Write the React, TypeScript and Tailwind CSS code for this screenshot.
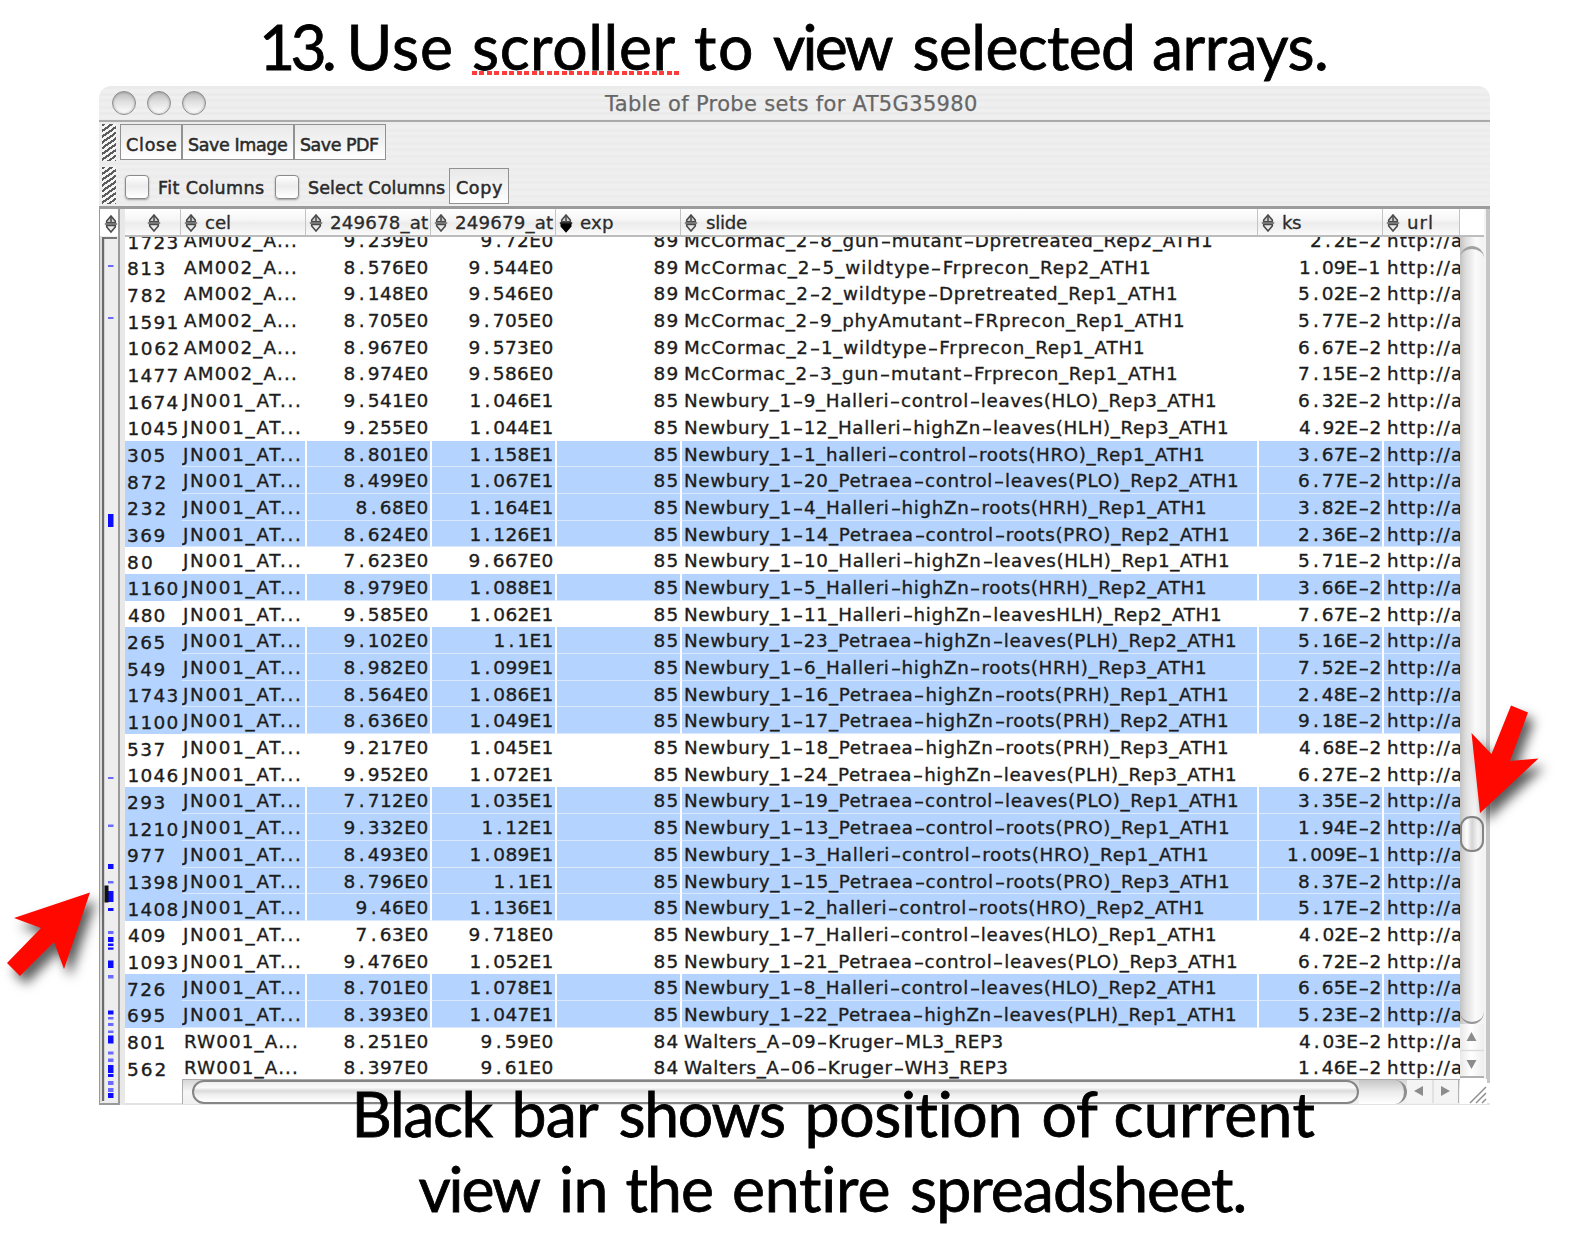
import React from "react";

const UI = '"DejaVu Sans", "Noto Sans", sans-serif';
const DISPLAY = 'Lato, "Open Sans", sans-serif';

let ctx: CanvasRenderingContext2D | null = null;
function measure(text: string, font: string) {
  if (!ctx) ctx = document.createElement("canvas").getContext("2d");
  ctx!.font = font;
  const m = ctx!.measureText(text);
  return { left: m.actualBoundingBoxLeft, ink: m.actualBoundingBoxLeft + m.actualBoundingBoxRight, advance: m.width };
}

/* Text tracked so that its ink spans exactly `width` pixels.
   `wide` lists characters that are set on a fixed, wider advance. */
function Fit({
  text,
  width,
  size,
  family = UI,
  weight = 400,
  ml = 0,
  wide = "",
  className = "",
}: {
  text: string;
  width: number;
  size: number;
  family?: string;
  weight?: number;
  ml?: number;
  wide?: string;
  className?: string;
}) {
  const font = `${weight} ${size}px ${family}`;
  const m = measure(text, font);
  const slot = size * 0.62;
  const chars = text.split("");
  const extra = chars.reduce((s, c) => (wide.includes(c) ? s + slot - measure(c, font).advance : s), 0);
  const spacing = (width - m.ink - extra) / Math.max(1, text.length - 1);
  const pieces = wide ? text.split(/([-.])/).filter(Boolean) : [text];
  return (
    <span className={"block shrink-0 whitespace-pre " + className} style={{ width, marginLeft: ml }}>
      <span
        className="block"
        style={{ fontFamily: family, fontWeight: weight, fontSize: size, letterSpacing: spacing, marginLeft: m.left }}
      >
        {pieces.map((p, i) =>
          wide && wide.includes(p) ? (
            <span
              key={i}
              className={"inline-block text-center tracking-normal " + (p === "-" ? "[transform:scaleX(1.6)]" : "")}
              style={{ width: slot + spacing }}
            >
              {p}
            </span>
          ) : (
            p
          ),
        )}
      </span>
    </span>
  );
}

type Word = [string, number, number];

function DisplayLine({ words, className = "" }: { words: Word[]; className?: string }) {
  let cursor = 0;
  return (
    <div className={"flex h-[75px] leading-[75px] text-black [-webkit-text-stroke:0.8px_#000] " + className}>
      {words.map(([text, x0, x1]) => {
        const ml = x0 - cursor;
        cursor = x1;
        return (
          <Fit
            key={text}
            text={text}
            width={x1 - x0}
            size={62.5}
            family={DISPLAY}
            ml={ml}
            className={
              text === "scroller"
                ? "relative after:absolute after:-left-[2px] after:top-[63px] after:h-[4px] after:w-[208px] after:bg-[repeating-linear-gradient(90deg,#ff3b3b_0_5px,#ffffff_5px_7.5px)] after:content-['']"
                : ""
            }
          />
        );
      })}
    </div>
  );
}

const TITLE: Word[] = [
  ["13.", 264, 334],
  ["Use", 351.5, 451],
  ["scroller", 474, 675.5],
  ["to", 695, 751],
  ["view", 773, 893.5],
  ["selected", 914.5, 1132],
  ["arrays.", 1154, 1326],
];
const CAPTION_1: Word[] = [
  ["Black", 356.5, 493.5],
  ["bar", 515.5, 599],
  ["shows", 620.5, 784],
  ["position", 808.5, 1019.5],
  ["of", 1043.5, 1098],
  ["current", 1115.5, 1314.5],
];
const CAPTION_2: Word[] = [
  ["view", 418.5, 541],
  ["in", 562, 604.5],
  ["the", 626.5, 712],
  ["entire", 734, 889.5],
  ["spreadsheet.", 912, 1244.5],
];

/* index, cel, 249678_at, 249679_at, exp, slide, slide width, ks, selected */
type Row = [string, string, string, string, string, string, number, string, boolean];
const AM = "AM002_A...";
const JN = "JN001_AT...";
const RW = "RW001_A...";
const ROWS: Row[] = [
  ["1723", AM, "9.239E0", "9.72E0", "89", "McCormac_2-8_gun-mutant-Dpretreated_Rep2_ATH1", 526, "2.2E-2", false],
  ["813", AM, "8.576E0", "9.544E0", "89", "McCormac_2-5_wildtype-Frprecon_Rep2_ATH1", 464, "1.09E-1", false],
  ["782", AM, "9.148E0", "9.546E0", "89", "McCormac_2-2_wildtype-Dpretreated_Rep1_ATH1", 491, "5.02E-2", false],
  ["1591", AM, "8.705E0", "9.705E0", "89", "McCormac_2-9_phyAmutant-FRprecon_Rep1_ATH1", 498, "5.77E-2", false],
  ["1062", AM, "8.967E0", "9.573E0", "89", "McCormac_2-1_wildtype-Frprecon_Rep1_ATH1", 458, "6.67E-2", false],
  ["1477", AM, "8.974E0", "9.586E0", "89", "McCormac_2-3_gun-mutant-Frprecon_Rep1_ATH1", 491, "7.15E-2", false],
  ["1674", JN, "9.541E0", "1.046E1", "85", "Newbury_1-9_Halleri-control-leaves(HLO)_Rep3_ATH1", 530, "6.32E-2", false],
  ["1045", JN, "9.255E0", "1.044E1", "85", "Newbury_1-12_Halleri-highZn-leaves(HLH)_Rep3_ATH1", 542, "4.92E-2", false],
  ["305", JN, "8.801E0", "1.158E1", "85", "Newbury_1-1_halleri-control-roots(HRO)_Rep1_ATH1", 518, "3.67E-2", true],
  ["872", JN, "8.499E0", "1.067E1", "85", "Newbury_1-20_Petraea-control-leaves(PLO)_Rep2_ATH1", 552, "6.77E-2", true],
  ["232", JN, "8.68E0", "1.164E1", "85", "Newbury_1-4_Halleri-highZn-roots(HRH)_Rep1_ATH1", 520, "3.82E-2", true],
  ["369", JN, "8.624E0", "1.126E1", "85", "Newbury_1-14_Petraea-control-roots(PRO)_Rep2_ATH1", 543, "2.36E-2", true],
  ["80", JN, "7.623E0", "9.667E0", "85", "Newbury_1-10_Halleri-highZn-leaves(HLH)_Rep1_ATH1", 543, "5.71E-2", false],
  ["1160", JN, "8.979E0", "1.088E1", "85", "Newbury_1-5_Halleri-highZn-roots(HRH)_Rep2_ATH1", 520, "3.66E-2", true],
  ["480", JN, "9.585E0", "1.062E1", "85", "Newbury_1-11_Halleri-highZn-leavesHLH)_Rep2_ATH1", 535, "7.67E-2", false],
  ["265", JN, "9.102E0", "1.1E1", "85", "Newbury_1-23_Petraea-highZn-leaves(PLH)_Rep2_ATH1", 550, "5.16E-2", true],
  ["549", JN, "8.982E0", "1.099E1", "85", "Newbury_1-6_Halleri-highZn-roots(HRH)_Rep3_ATH1", 520, "7.52E-2", true],
  ["1743", JN, "8.564E0", "1.086E1", "85", "Newbury_1-16_Petraea-highZn-roots(PRH)_Rep1_ATH1", 542, "2.48E-2", true],
  ["1100", JN, "8.636E0", "1.049E1", "85", "Newbury_1-17_Petraea-highZn-roots(PRH)_Rep2_ATH1", 542, "9.18E-2", true],
  ["537", JN, "9.217E0", "1.045E1", "85", "Newbury_1-18_Petraea-highZn-roots(PRH)_Rep3_ATH1", 542, "4.68E-2", false],
  ["1046", JN, "9.952E0", "1.072E1", "85", "Newbury_1-24_Petraea-highZn-leaves(PLH)_Rep3_ATH1", 550, "6.27E-2", false],
  ["293", JN, "7.712E0", "1.035E1", "85", "Newbury_1-19_Petraea-control-leaves(PLO)_Rep1_ATH1", 552, "3.35E-2", true],
  ["1210", JN, "9.332E0", "1.12E1", "85", "Newbury_1-13_Petraea-control-roots(PRO)_Rep1_ATH1", 543, "1.94E-2", true],
  ["977", JN, "8.493E0", "1.089E1", "85", "Newbury_1-3_Halleri-control-roots(HRO)_Rep1_ATH1", 522, "1.009E-1", true],
  ["1398", JN, "8.796E0", "1.1E1", "85", "Newbury_1-15_Petraea-control-roots(PRO)_Rep3_ATH1", 543, "8.37E-2", true],
  ["1408", JN, "9.46E0", "1.136E1", "85", "Newbury_1-2_halleri-control-roots(HRO)_Rep2_ATH1", 518, "5.17E-2", true],
  ["409", JN, "7.63E0", "9.718E0", "85", "Newbury_1-7_Halleri-control-leaves(HLO)_Rep1_ATH1", 530, "4.02E-2", false],
  ["1093", JN, "9.476E0", "1.052E1", "85", "Newbury_1-21_Petraea-control-leaves(PLO)_Rep3_ATH1", 551, "6.72E-2", false],
  ["726", JN, "8.701E0", "1.078E1", "85", "Newbury_1-8_Halleri-control-leaves(HLO)_Rep2_ATH1", 530, "6.65E-2", true],
  ["695", JN, "8.393E0", "1.047E1", "85", "Newbury_1-22_Petraea-highZn-leaves(PLH)_Rep1_ATH1", 550, "5.23E-2", true],
  ["801", RW, "8.251E0", "9.59E0", "84", "Walters_A-09-Kruger-ML3_REP3", 317, "4.03E-2", false],
  ["562", RW, "8.397E0", "9.61E0", "84", "Walters_A-06-Kruger-WH3_REP3", 321, "1.46E-2", false],
];

function SortIcon({ active = false }: { active?: boolean }) {
  return (
    <svg width="14" height="20" viewBox="0 0 14 20" className="mt-[2px] block shrink-0">
      <path d="M7 2 L11.3 7 V8.8 H2.7 V7 Z" fill="#d0d0d0" stroke="#4a4a4a" strokeWidth="1.6" />
      <path d="M7 3.4 V8.6" stroke="#5c5c5c" strokeWidth="1.8" />
      <path
        d="M7 18 L11.3 13 V11.4 H2.7 V13 Z"
        fill={active ? "#000" : "#ececec"}
        stroke={active ? "#000" : "#4a4a4a"}
        strokeWidth={active ? 2.4 : 1.6}
      />
      <path d="M0.8 10 H13.2" stroke={active ? "#111" : "#6a6a6a"} strokeWidth="1.4" />
    </svg>
  );
}

function HeaderCell({ label, w, textW, active }: { label: string; w: string; textW: number; active?: boolean }) {
  return (
    <div className={"flex h-full shrink-0 items-center overflow-hidden border-r-[1.5px] border-[#c4c4c4] " + w}>
      <div className="ml-[3px]">
        <SortIcon active={active} />
      </div>
      <Fit text={label} width={textW} size={18.2} ml={8} className="mt-[2px] leading-[26px] [-webkit-text-stroke:0.3px_#2a2a2a]" />
    </div>
  );
}

const sel = "border-b-[1.5px] border-b-[#dbe9ff] bg-[#b4d4ff] ";
const plain = "border-b-[1.5px] border-b-transparent ";

function Num({ text }: { text: string }) {
  const width =
    text.length * 12 -
    (text[0] === "1" ? 2 : 1) -
    (text.endsWith("1") ? 1 : 0) -
    (text.includes("-") ? 2.5 : 0);
  return <Fit text={text} width={width} size={18.5} wide="-." />;
}

function TableRow({ row }: { row: Row }) {
  const [idx, cel, a, b, exp, slide, slideW, ks, on] = row;
  const c = (on ? sel : plain) + "flex h-full shrink-0 overflow-hidden whitespace-nowrap border-r-2 border-r-white ";
  const n = c + "w-[125px] justify-end pr-[2.5px]";
  return (
    <div className="flex h-[26.69px] w-[1335px] shrink-0 leading-[28px] text-[#1c1c1c] [-webkit-text-stroke:0.35px_#1c1c1c]">
      <div className={(on ? "bg-[#b4d4ff] " : "") + "h-full w-[57px] shrink-0 whitespace-nowrap pl-[3px] pt-[1.5px]"}>
        <Fit text={idx} width={idx.length * 12.5 - (idx[0] === "1" ? 2 : 1)} size={18.5} ml={idx[0] === "1" ? 1.5 : 0} />
      </div>
      <div className={c + "w-[125px]"}>
        <Fit text={cel} width={cel === JN ? 117 : 111} size={18.3} ml={cel === JN ? 0 : cel === RW ? 3 : 2} />
      </div>
      <div className={n}>
        <Num text={a} />
      </div>
      <div className={n}>
        <Num text={b} />
      </div>
      <div className={n}>
        <Num text={exp} />
      </div>
      <div className={c + "w-[577px]"}>
        <Fit text={slide} width={slideW} size={18.3} ml={slide[0] === "W" ? 2 : 3} wide="-" />
      </div>
      <div className={n}>
        <Num text={ks} />
      </div>
      <div className={(on ? sel : plain) + "h-full w-[76px] shrink-0 overflow-hidden"}>
        <Fit text="http://a" width={73} size={18.3} ml={4} />
      </div>
    </div>
  );
}

/* y, height, faint — selected rows over the whole sheet */
const MARKS: [number, number, boolean][] = [
  [266, 2, true], [318, 2, true], [515, 13, false], [778, 2, true], [825.5, 2.5, true], [865, 5, false],
  [882, 2.5, true], [892, 11, false], [909, 3, false], [932, 3, true], [938, 5, false], [944.5, 2.5, false],
  [948.5, 2.2, false], [961.5, 7.5, false], [976, 3.5, true], [1011.5, 4, false], [1018, 2.5, true],
  [1024, 3, true], [1031.5, 2.5, true], [1036.5, 8, false], [1052.5, 3, true], [1059.5, 3.5, true],
  [1066, 8, false], [1075, 3, false], [1082, 4, true], [1089, 4, true], [1094, 5, false],
];

function Overview() {
  return (
    <div className="flex w-[21px] shrink-0 flex-col border-b-2 border-l-[1.5px] border-r-2 border-[#9a9a9a] bg-[#ececec]">
      <div className="flex h-[27px] items-center justify-center bg-white pl-[3px]">
        <SortIcon />
      </div>
      <svg width="17" height="866" viewBox="101 237 17 866" className="block">
        <rect x="101" y="237" width="17" height="866" fill="#eeeeee" />
        <rect x="101" y="237" width="2" height="866" fill="#dcdcdc" />
        <rect x="103" y="238" width="15" height="2" fill="#777" />
        <rect x="103" y="238" width="2.2" height="864" fill="#6c6c6c" />
        {MARKS.map(([y, h, faint]) => (
          <rect key={y} x="109" y={y} width="5.5" height={h} fill={faint ? "#6a6aff" : "#0c0cff"} />
        ))}
        <rect x="105.5" y="886.5" width="4" height="17" fill="#111" />
      </svg>
    </div>
  );
}

function Grip() {
  return (
    <div className="h-[37px] w-[14px] shrink-0 bg-[repeating-linear-gradient(145deg,#5c5c5c_0_2.2px,#f6f6f6_2.2px_4.7px)]" />
  );
}

function ToolButton({ label, w, textW }: { label: string; w: string; textW: number }) {
  return (
    <div className={"flex h-[36px] shrink-0 items-center justify-center border-[1.5px] border-[#919191] bg-[linear-gradient(#e9e9e9,#f3f3f3_50%,#ffffff)] " + w}>
      <Fit text={label} width={textW} size={17.5} className="mt-[5px] leading-[24px] [-webkit-text-stroke:0.5px_#2a2a2a]" />
    </div>
  );
}

function Check() {
  return (
    <div className="mt-[2px] h-[24px] w-[24px] shrink-0 rounded-[4px] border-[1.5px] border-[#8a8a8a] bg-[linear-gradient(#ffffff,#ececec_45%,#ffffff)] shadow-[0_1px_2px_rgba(0,0,0,0.35)]" />
  );
}

function TrafficLight() {
  return (
    <div className="h-[24px] w-[24px] rounded-full border-[1.8px] border-[#8c8c8c] bg-[linear-gradient(#bcbcbc,#e0e0e0_45%,#ffffff)] shadow-[inset_0_0_3px_rgba(0,0,0,0.3)]" />
  );
}

function VScroll() {
  return (
    <div className="flex w-[24px] shrink-0 flex-col">
      <div className="h-[28px] border-b-2 border-[#bdbdbd] bg-white" />
      <div className="flex h-[787px] flex-col bg-[linear-gradient(90deg,#c2c2c2,#dedede_25%,#fafafa_65%,#f2f2f2)] pt-[9px]">
        <div className="h-[12px] rounded-t-[12px] border-t-[3px] border-[#a2a2a2]" />
        <div className="mt-[558px] h-[36px] w-[24px] rounded-[11px] border-[2.5px] border-[#848484] bg-[linear-gradient(90deg,#e2e2e2,#ffffff_25%,#d4d4d4_50%,#f5f5f5_80%,#e6e6e6)]" />
        <div className="mt-auto h-[14px] rounded-b-[12px] border-b-[2.5px] border-[#969696]" />
      </div>
      <div className="flex h-[54px] flex-col items-center border-b-2 border-[#b0b0b0] bg-[linear-gradient(90deg,#e8e8e8,#fff_45%,#eee)]">
        <svg width="24" height="52" viewBox="0 0 24 52" className="block">
          <path d="M11.5 8 L16.5 17 H6.5 Z" fill="#8c8c8c" />
          <path d="M0 26.5 H24" stroke="#dcdcdc" strokeWidth="1.5" />
          <path d="M11.5 45 L16.5 36 H6.5 Z" fill="#8c8c8c" />
        </svg>
      </div>
    </div>
  );
}

function HScroll() {
  return (
    <div className="flex h-[25px] w-[1278px] shrink-0 border-l-[1.5px] border-t-[1.5px] border-[#adadad] bg-[linear-gradient(#d6d6d6,#f6f6f6_50%,#f0f0f0)]">
      <div className="ml-[9px] h-[23.5px] w-[1167px] rounded-full border-[2.5px] border-[#858585] bg-[linear-gradient(#f0f0f0,#fafafa_28%,#dadada_45%,#f0f0f0_65%,#ffffff)]" />
      <div className="h-[23.5px] w-[48px] rounded-r-full border-r-[3.5px] border-[#8e8e8e] bg-[linear-gradient(#c6c6c6,#ececec_50%,#ffffff)]" />
      <svg width="52" height="23" viewBox="0 0 52 23" className="block">
        <rect width="52" height="23" fill="#f4f4f4" />
        <path d="M7 11 L16 6 V16 Z" fill="#8c8c8c" />
        <path d="M26 0 V23" stroke="#dcdcdc" strokeWidth="1.5" />
        <path d="M43 11 L34 6 V16 Z" fill="#8c8c8c" />
        <path d="M51.5 0 V23" stroke="#b4b4b4" />
      </svg>
    </div>
  );
}

const shadow = "[filter:drop-shadow(6px_8px_6px_rgba(0,0,0,0.65))]";

export default function App() {
  return (
    <div className="relative h-[1233px] w-[1576px] overflow-hidden bg-white" style={{ fontFamily: UI }}>
      <div className="h-[86px] pt-[8px]">
        <DisplayLine words={TITLE} className="relative z-10" />
      </div>

      <div className="ml-[99px] flex h-[1020px] w-[1391px] flex-col overflow-hidden rounded-t-[12px]">
        <div className="flex h-[36px] shrink-0 items-center border-b-2 border-[#aaaaaa] bg-[repeating-linear-gradient(#ebebeb_0_3px,#efefef_3px_6.6px)]">
          <div className="ml-[13px] flex gap-[11px]">
            <TrafficLight />
            <TrafficLight />
            <TrafficLight />
          </div>
          <Fit
            text="Table of Probe sets for AT5G35980"
            width={372}
            size={21}
            ml={398}
            className="mt-[2px] leading-[30px] text-[#666666] [-webkit-text-stroke:0.25px_#666666]"
          />
        </div>
        <div className="flex h-[87px] shrink-0 flex-col border-b-[3px] border-[#9c9c9c] bg-[repeating-linear-gradient(#ececec_0_3px,#efefef_3px_6.6px)] text-[#2a2a2a]">
          <div className="flex pl-[3px] pt-[2px]">
            <Grip />
            <div className="ml-[4px] flex">
              <ToolButton label="Close" w="w-[62px]" textW={50} />
              <ToolButton label="Save Image" w="w-[112px]" textW={98} />
              <ToolButton label="Save PDF" w="w-[92px]" textW={78} />
            </div>
          </div>
          <div className="mt-[6px] flex items-center pl-[3px] [-webkit-text-stroke:0.5px_#2a2a2a]">
            <Grip />
            <div className="w-[9px]" />
            <Check />
            <Fit text="Fit Columns" width={105} size={17.5} ml={10} className="mt-[5px] leading-[24px]" />
            <div className="w-[11px]" />
            <Check />
            <Fit text="Select Columns" width={136} size={17.5} ml={10} className="mt-[5px] leading-[24px]" />
            <div className="ml-[4px]">
              <ToolButton label="Copy" w="w-[60px]" textW={46} />
            </div>
          </div>
        </div>

        <div className="flex h-[896px] shrink-0">
          <Overview />
          <div className="w-[5px] shrink-0 bg-[#e8e8e8]" />
          <div className="flex w-[1365px] shrink-0 flex-col border-b-2 border-[#e2e2e2] bg-white">
            <div className="flex h-[874px] shrink-0">
              <div className="flex w-[1335px] shrink-0 flex-col overflow-hidden">
                <div className="flex h-[28px] shrink-0 overflow-hidden border-b-2 border-[#bcbcbc] bg-[linear-gradient(#ffffff,#f6f6f6_40%,#ececec_55%,#fafafa)] text-[#2a2a2a]">
                  <div className="flex h-full w-[56px] shrink-0 items-center justify-center border-r-[1.5px] border-[#c4c4c4] pl-[3px]">
                    <SortIcon />
                  </div>
                  <HeaderCell label="cel" w="w-[125px]" textW={24} />
                  <HeaderCell label="249678_at" w="w-[125px]" textW={97} />
                  <HeaderCell label="249679_at" w="w-[125px]" textW={97} />
                  <HeaderCell label="exp" w="w-[125px]" textW={32} active />
                  <HeaderCell label="slide" w="w-[577px]" textW={41} />
                  <HeaderCell label="ks" w="w-[125px]" textW={18} />
                  <HeaderCell label="url" w="w-[77px]" textW={24} />
                </div>
                <div className="flex h-[846px] flex-col overflow-hidden">
                  <div className="-mt-[10px] flex flex-col">
                    {ROWS.map((r) => (
                      <TableRow key={r[0]} row={r} />
                    ))}
                  </div>
                </div>
              </div>
              <VScroll />
              <div className="w-[2px] shrink-0 bg-[#f4f4f4]" />
              <div className="w-[4px] shrink-0 bg-[#c6c6c6]" />
            </div>
            <div className="-mt-[4px] flex pl-[57px]">
              <HScroll />
              <div className="flex h-[25px] w-[27px] items-end justify-end bg-white">
                <svg width="18" height="18" viewBox="0 0 18 18" className="block">
                  <path d="M1 17 L17 1 M7 17 L17 7 M13 17 L17 13" stroke="#8f8f8f" strokeWidth="1.5" />
                </svg>
              </div>
            </div>
          </div>
        </div>
      </div>

      <div className="relative z-10 -mt-[31px]">
        <DisplayLine words={CAPTION_1} />
        <DisplayLine words={CAPTION_2} />
      </div>

      <svg width="110" height="130" viewBox="0 880 110 130" className={"absolute left-0 top-[880px] z-20 overflow-visible " + shadow}>
        <path d="M90 892.5 L14 918 L41 928 L7 963 L20 976 L54 942 L64 969 Z" fill="#ff0800" />
      </svg>
      <svg width="110" height="130" viewBox="1460 695 110 130" className={"absolute left-[1460px] top-[695px] z-20 overflow-visible " + shadow}>
        <path d="M1511 705.5 L1528 712.5 L1510 761 L1538.5 758.5 L1480 813 L1471.5 733 L1491.5 754 Z" fill="#ff0800" />
      </svg>
    </div>
  );
}
